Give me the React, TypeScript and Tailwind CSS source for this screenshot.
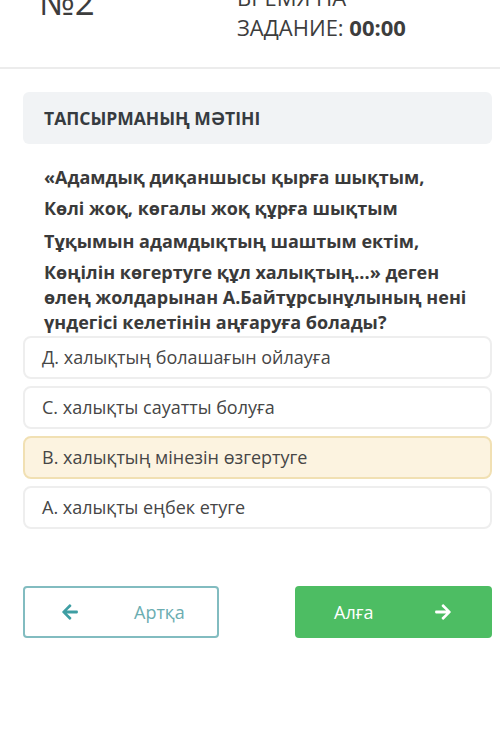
import React from "react";
import { FaArrowLeft, FaArrowRight } from "react-icons/fa";

const options = [
  { text: "Д. халықтың болашағын ойлауға", selected: false },
  { text: "С. халықты сауатты болуға", selected: false },
  { text: "В. халықтың мінезін өзгертуге", selected: true },
  { text: "А. халықты еңбек етуге", selected: false },
];

export default function App() {
  return (
    <div
      className="w-[500px] h-[736px] bg-white overflow-hidden text-[#3b3b3b]"
      style={{ fontFamily: '"Open Sans", "Noto Sans", sans-serif' }}
    >
      {/* Header */}
      <div className="h-[69px] border-b-2 border-[#ececec] overflow-hidden">
        <div className="flex items-start -mt-[18px]">
          <div className="ml-[39px] mt-[2px] text-[35px] leading-[35px] text-[#3d3d3d] w-[198px]">
            №2
          </div>
          <div className="text-[22px] leading-[30px] text-[#3d3d3d]">
            <div>ВРЕМЯ НА</div>
            <div>
              ЗАДАНИЕ: <span className="font-bold">00:00</span>
            </div>
          </div>
        </div>
      </div>

      {/* Task title box */}
      <div className="ml-[23px] w-[469px] mt-[23px] h-[52px] rounded-[6px] bg-[#f1f3f5] flex items-center pl-[21px]">
        <span className="text-[17.5px] font-bold text-[#363b40]">
          ТАПСЫРМАНЫҢ МӘТІНІ
        </span>
      </div>

      {/* Question text */}
      <div className="ml-[44px] mt-[21px] text-[18px] leading-[25px] font-bold text-[#3a3a3a] whitespace-nowrap">
        <p className="mb-[6px]">«Адамдық диқаншысы қырға шықтым,</p>
        <p className="mb-[8px]">Көлі жоқ, көгалы жоқ құрға шықтым</p>
        <p className="mb-[6px]">Тұқымын адамдықтың шаштым ектім,</p>
        <p>
          Көңілін көгертуге құл халықтың...» деген
          <br />
          өлең жолдарынан А.Байтұрсынұлының нені
          <br />
          үндегісі келетінін аңғаруға болады?
        </p>
      </div>

      {/* Options */}
      <div className="ml-[23px] w-[469px] mt-[1px] flex flex-col gap-[7px]">
        {options.map((o) => (
          <div
            key={o.text}
            className={
              o.selected
                ? "h-[43px] rounded-[8px] border-2 border-[#f1e0b3] bg-[#fcf3e0] flex items-center pl-[17px] text-[18px] text-[#464646]"
                : "h-[43px] rounded-[8px] border-2 border-[#eeeeee] bg-white flex items-center pl-[17px] text-[18px] text-[#464646]"
            }
          >
            {o.text}
          </div>
        ))}
      </div>

      {/* Nav buttons */}
      <div className="ml-[23px] w-[469px] mt-[57px] flex justify-between">
        <div className="w-[196px] h-[52px] rounded-[4px] border-2 border-[#82bcc0] flex items-center pl-[36px]">
          <FaArrowLeft className="w-[18px] h-[18px] text-[#3e9ea3]" />
          <span className="ml-[55px] text-[18px] text-[#6badb1]">Артқа</span>
        </div>
        <div className="w-[197px] h-[52px] rounded-[4px] bg-[#4dbd63] flex items-center pl-[39px]">
          <span className="text-[18px] text-white">Алға</span>
          <FaArrowRight className="ml-[61px] w-[18px] h-[18px] text-white" />
        </div>
      </div>
    </div>
  );
}
